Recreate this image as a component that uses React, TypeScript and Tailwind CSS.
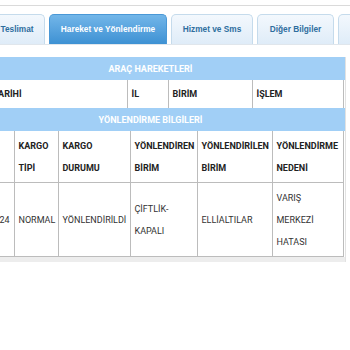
import React from "react";

const tabBase =
  "h-[30px] flex items-center justify-center shrink-0 rounded-t-[5px] border border-b-0 text-[8.3px] font-bold";
const inactive =
  tabBase + " border-[#c5dbec] bg-gradient-to-b from-[#f3f8fd] to-[#dfecf8] text-[#2e6e9e]";
const active =
  tabBase + " border-[#4a98d6] bg-gradient-to-b from-[#72b6e9] to-[#3d91d3] text-white";

const th = "border-r border-[#bcbcbc] px-[4px] py-[3px] text-left align-middle font-bold text-[#222]";
const td = "border-r border-[#bcbcbc] px-[4px] py-[3.5px] text-left align-middle text-[#333]";

export default function App() {
  return (
    <div className="w-[350px] h-[350px] bg-white overflow-hidden" style={{ fontFamily: "Roboto, 'Liberation Sans', sans-serif" }}>
      <div className="mt-[5px] border-t border-[#dadada] pt-[8px]">
        <div
          className="flex gap-[4px] ml-[-11px] border-b border-[#e0e6ec]"
          style={{ fontFamily: "'Liberation Sans', Arial, sans-serif" }}
        >
          <div className={inactive + " w-[56px]"}>Teslimat</div>
          <div className={active + " w-[118px]"}>Hareket ve Yönlendirme</div>
          <div className={inactive + " w-[82px]"}>Hizmet ve Sms</div>
          <div className={inactive + " w-[77px]"}>Diğer Bilgiler</div>
          <div className={inactive + " w-[60px]"}></div>
        </div>
      </div>

      <div className="mt-[12px] ml-[-44px] w-[390px] border-r border-[#e2e2e2] text-[9px] leading-[22px]">
        <div className="h-[23px] bg-[#a1cff6] flex items-center justify-center text-white font-bold">
          ARAÇ HAREKETLERİ
        </div>
        <table className="table-fixed border-collapse w-[387px]">
          <colgroup>
            <col className="w-[171px]" />
            <col className="w-[41px]" />
            <col className="w-[84px]" />
            <col className="w-[91px]" />
          </colgroup>
          <thead>
            <tr className="bg-white">
              <th className={th + " whitespace-nowrap pl-[9px]"}>İŞLEM TARİHİ</th>
              <th className={th}>İL</th>
              <th className={th}>BİRİM</th>
              <th className={th}>İŞLEM</th>
            </tr>
          </thead>
        </table>
        <div className="h-[23px] bg-[#a1cff6] flex items-center justify-center text-white font-bold">
          YÖNLENDİRME BİLGİLERİ
        </div>
        <table className="table-fixed border-collapse w-[387px] border-b border-[#bcbcbc]">
          <colgroup>
            <col className="w-[58px]" />
            <col className="w-[44px]" />
            <col className="w-[72px]" />
            <col className="w-[67px]" />
            <col className="w-[75px]" />
            <col className="w-[71px]" />
          </colgroup>
          <thead>
            <tr className="border-b border-[#bcbcbc]">
              <th className={th + " pt-[4px]"}>TARİH</th>
              <th className={th + " pt-[4px]"}>KARGO TİPİ</th>
              <th className={th + " pt-[4px]"}>KARGO DURUMU</th>
              <th className={th + " pt-[4px]"}>YÖNLENDİREN BİRİM</th>
              <th className={th + " pt-[4px]"}>YÖNLENDİRİLEN BİRİM</th>
              <th className={th + " pt-[4px]"}>YÖNLENDİRME NEDENİ</th>
            </tr>
          </thead>
          <tbody>
            <tr>
              <td className={td + " text-right whitespace-nowrap"}>12.05.2024</td>
              <td className={td}>NORMAL</td>
              <td className={td}>YÖNLENDİRİLDİ</td>
              <td className={td}>ÇİFTLİK-KAPALI</td>
              <td className={td}>ELLİALTILAR</td>
              <td className={td}>VARIŞ MERKEZİ HATASI</td>
            </tr>
          </tbody>
        </table>
        <div className="h-[5px] bg-[#ededed]"></div>
      </div>
    </div>
  );
}
